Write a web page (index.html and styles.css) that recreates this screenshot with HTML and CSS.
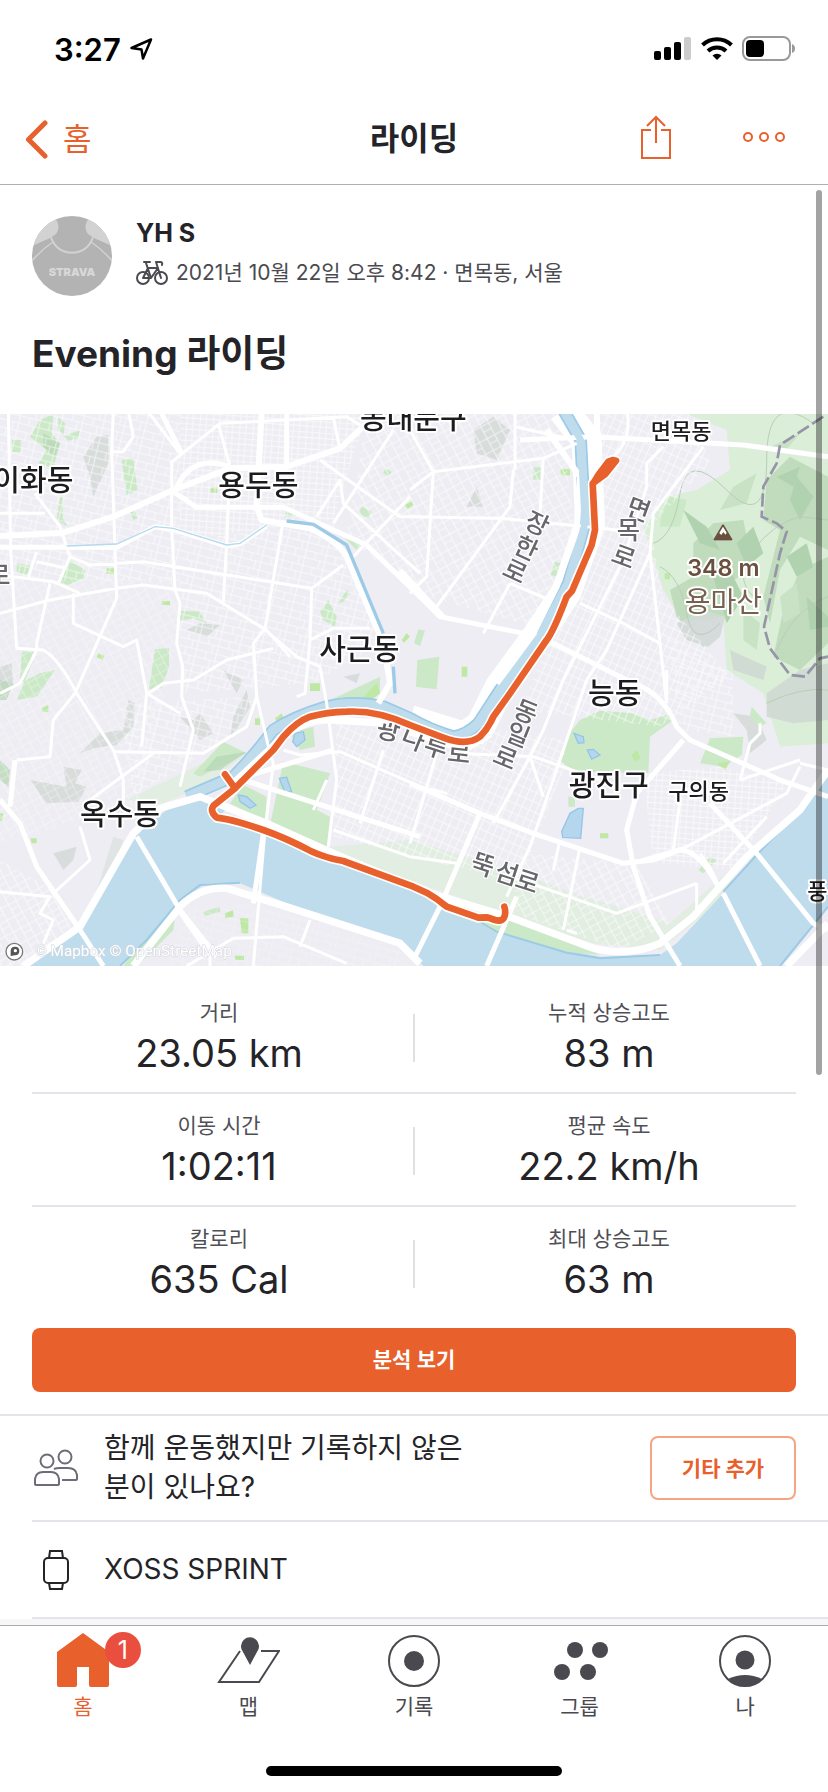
FILE: index.html
```
<!DOCTYPE html>
<html lang="ko">
<head>
<meta charset="utf-8">
<meta name="viewport" content="width=device-width, initial-scale=1">
<title>라이딩</title>
<link rel="stylesheet" href="styles.css">
</head>
<body>
<div class="app">
  <div class="status">
    <div class="status-left">
      <span>3:27</span>
      <svg width="24" height="24" viewBox="0 0 24 24" fill="none" stroke="#000" stroke-width="2.500" stroke-linejoin="round"><path d="M22 2.500 L2.500 11 L12.500 12.500 L14 21.500 Z"/></svg>
    </div>
    <div class="status-right">
      <svg width="38" height="26" viewBox="0 0 38 26"><rect x="0" y="15" width="7" height="9" rx="2"/><rect x="10" y="11" width="7" height="13" rx="2"/><rect x="20" y="6" width="7" height="18" rx="2"/><rect x="30" y="1" width="7" height="23" rx="2" fill="#ccc"/></svg>
      <svg width="32" height="26" viewBox="0 0 32 26" fill="none" stroke="#000" stroke-width="4"><path d="M1.500 9 A21 21 0 0 1 30.500 9"/><path d="M7 15 A13 13 0 0 1 25 15"/><path d="M16 24 L11.500 19.500 A6.500 6.500 0 0 1 20.500 19.500 Z" fill="#000" stroke="none"/></svg>
      <svg width="54" height="26" viewBox="0 0 54 26"><rect x="1" y="1" width="47" height="23" rx="7" fill="none" stroke="#999" stroke-width="2"/><rect x="4" y="4" width="18" height="17" rx="4"/><path d="M50 8 Q53 9 53 12.500 Q53 16 50 17 Z" fill="#999"/></svg>
    </div>
  </div>

  <header class="nav">
    <a class="back" href="#home">
      <svg width="24" height="40" viewBox="0 0 24 40" fill="none" stroke="#e8602c" stroke-width="5" stroke-linecap="round" stroke-linejoin="round"><path d="M21 4 L4.500 20.500 L21 37"/></svg>
      <span>홈</span>
    </a>
    <h1 class="nav-title">라이딩</h1>
    <div class="nav-actions">
      <button class="icon-btn" type="button" aria-label="공유">
        <svg width="32" height="44" viewBox="0 0 32 44" fill="none" stroke="#e8602c" stroke-width="2"><path d="M11 15 H2 V43 H30 V15 H21 M16 28 V2 M7 11 L16 2 L25 11"/></svg>
      </button>
      <button class="icon-btn" type="button" aria-label="더 보기">
        <svg width="44" height="12" viewBox="0 0 44 12" fill="none" stroke="#e8602c" stroke-width="2"><circle cx="6" cy="6" r="4"/><circle cx="22" cy="6" r="4"/><circle cx="38" cy="6" r="4"/></svg>
      </button>
    </div>
  </header>

  <main class="content">
    <div class="scrollbar"></div>
    <section class="athlete">
      <svg class="avatar" viewBox="0 0 80 80">
        <defs><clipPath id="av"><circle cx="40" cy="40" r="40"/></clipPath></defs>
        <g clip-path="url(#av)">
          <rect width="80" height="80" fill="#b3b3b3"/>
          <path d="M0 0 H22 C27 7 28 13 24 18 L18 22 L0 30 Z M80 0 H58 C53 7 52 13 56 18 L62 22 L80 30 Z" fill="#d2d2d2"/>
          <path d="M19 21 C25 42 55 42 61 21" fill="none" stroke="#d2d2d2" stroke-width="2"/>
          <path d="M21 26 Q9 34 0 45 M59 26 Q71 34 80 45" fill="none" stroke="#d2d2d2" stroke-width="1.500"/>
        </g>
        <text x="40" y="60" text-anchor="middle" class="avatar-text">STRAVA</text>
      </svg>
      <div class="athlete-info">
        <strong class="name">YH S</strong>
        <div class="meta">
          <svg width="32" height="26" viewBox="0 0 32 26" fill="none" stroke="#4a4a50" stroke-width="2" stroke-linejoin="round" stroke-linecap="round"><circle cx="7" cy="18" r="6"/><circle cx="25" cy="18" r="6"/><path d="M7 18 L12 8 H22 L15 18 H7 M15 18 L10 3 M8 2 H14 M25 18 L20 2 H24 Q27 2 26 5"/></svg>
          <span>2021년 10월 22일 오후 8:42 · 면목동, 서울</span>
        </div>
      </div>
    </section>
    <h2 class="title">Evening 라이딩</h2>

    <svg class="map" viewBox="0 12 2484 1656" role="img" aria-label="라이딩 경로 지도">
      <defs>
        <pattern id="s1" width="62" height="46" patternUnits="userSpaceOnUse" patternTransform="rotate(14)"><path d="M0 2 H62 M2 0 V46 M32 0 V24 M0 24 H62 M48 24 V46" /></pattern>
        <pattern id="s2" width="44" height="56" patternUnits="userSpaceOnUse" patternTransform="rotate(24)"><path d="M0 2 H44 M2 0 V56 M22 0 V56 M0 30 H44"/></pattern>
        <pattern id="s3" width="52" height="40" patternUnits="userSpaceOnUse" patternTransform="rotate(-28)"><path d="M0 2 H52 M2 0 V40 M0 20 H30 M28 0 V40"/></pattern>
        <pattern id="s4" width="40" height="34" patternUnits="userSpaceOnUse" patternTransform="rotate(4)"><path d="M0 2 H40 M2 0 V34 M20 0 V34 M0 18 H40"/></pattern>
      </defs>
      <rect y="12" width="2484" height="1656" fill="#eeedf3"/>

      <g class="hill">
        <path d="M250 140 L290 80 L325 75 L325 160 L280 260 L270 200 Z M560 660 L600 640 L660 645 L620 680 Z M670 780 L730 810 L710 850 Z M1420 60 L1480 20 L1530 60 L1490 150 L1430 130 Z M1430 230 L1450 290 L1400 290 Z M90 1110 L200 1130 L190 1070 L245 1080 L225 1120 L260 1130 L235 1175 L140 1180 Z M240 1030 L300 970 L370 960 L385 870 L405 880 L400 950 L350 1005 L280 1015 Z M540 920 L580 930 L600 910 L640 970 L600 990 Z M160 1330 L230 1310 L220 1350 L190 1380 Z M700 920 L740 840 L750 890 L690 990 Z M0 770 L35 760 L40 830 L0 860 Z M2200 910 L2270 920 L2300 990 L2250 1030 L2240 960 Z M2190 690 L2330 680 L2310 720 L2220 720 Z M1030 800 L1080 790 L1070 820 Z"/>
        <path d="M270 1510 L340 1280 L370 1290 L300 1480 Z" opacity=".6"/>
      </g>
      <g class="park-soft">
        <path d="M2060 12 H2484 V1000 L2340 1010 L2290 850 L2180 780 L2170 620 L2050 640 L1990 540 L1930 350 L2000 260 L2090 240 L2190 180 L2180 60 Z"/>
        <path d="M380 1170 L650 1040 L740 1030 L640 1110 L470 1190 Z M990 1310 L1230 1290 L1560 1390 L1720 1450 L2010 1540 L2200 1370 L2240 1350 L2130 1500 L1980 1620 L1780 1600 L1540 1520 L1000 1330 Z" opacity=".7"/>
      </g>
      <g class="park">
        <path d="M120 30 L160 12 L155 70 L180 100 L160 175 L115 160 L140 120 L90 80 Z M175 20 L195 40 L190 80 L240 60 L235 85 L205 92 L175 60 Z M36 90 H62 V126 H36 Z M365 150 L400 145 L412 240 L380 255 Z M180 260 H188 V325 L205 352 L170 330 Z M205 450 L255 480 L250 505 L205 525 L172 515 Z M50 460 L92 468 L85 495 L50 488 Z M390 305 L405 302 L412 325 L400 330 Z M540 602 L600 605 L620 640 L580 625 L540 632 Z M960 605 L985 570 L1010 620 L1005 650 L970 630 Z M1015 580 L1040 540 L1052 550 L1030 575 Z M465 718 L507 714 V770 L485 835 L447 838 Z M65 725 H110 L80 800 L50 870 L110 860 L165 780 L120 790 L60 820 Z M1035 385 L1080 400 L1070 420 Z M860 296 L910 318 L855 322 Z M1085 290 L1115 305 L1105 325 L1075 310 Z M1155 175 L1175 185 L1168 200 L1150 190 Z"/>
        <path d="M980 875 L1140 800 L1140 850 L1100 880 Z M1252 750 L1318 740 L1310 838 L1248 830 Z M1600 172 H1622 V210 H1600 Z M1665 455 L1685 460 L1670 500 L1652 495 Z M1255 658 L1275 662 L1260 708 L1242 700 Z"/>
        <path d="M850 1055 L990 1090 L950 1200 L990 1220 L980 1315 L810 1245 Z M730 1125 L800 1160 L795 1235 L690 1180 Z M580 1090 L670 995 L740 1030 L600 1100 Z M870 970 L940 950 L945 1010 L900 1020 Z"/>
        <path d="M1740 930 L1800 902 L1900 910 L1950 930 L2015 910 L2020 930 L1950 980 L1945 1090 L1730 1085 L1680 1055 L1700 980 Z M2100 1060 L2130 985 L2230 980 L2225 1035 L2170 1070 Z M2255 890 L2300 940 L2275 950 L2250 915 Z M1985 300 L2010 260 L2060 270 L2040 350 L1980 350 Z M1705 1160 H1725 V1190 H1705 Z M2095 1380 L2130 1340 L2150 1350 L2110 1390 Z"/>
        <path d="M370 1668 L440 1570 L530 1480 L520 1560 L440 1640 L410 1668 Z M610 1505 L660 1490 V1505 L615 1518 Z"/>
      </g>
      <g class="park-bright">
        <path d="M632 232 H652 V248 H632 Z M320 475 H342 V491 H320 Z M485 573 H510 V585 H485 Z M295 730 L314 738 L308 750 L290 742 Z M930 820 H960 V843 H930 Z M1212 285 L1235 272 L1240 285 L1222 297 Z M1682 178 H1710 V196 H1682 Z M1385 770 H1402 V800 H1385 Z M1994 490 H2010 V508 H1994 Z M1205 690 L1220 670 L1230 680 L1212 698 Z M720 1525 H745 V1570 H725 Z M675 1510 L700 1500 V1520 L675 1525 Z M705 1637 H732 V1650 H705 Z M1800 1270 H1825 V1285 H1800 Z M1895 1035 L1910 1020 L1922 1045 L1905 1055 Z M125 895 L145 885 V905 H127 Z M765 925 H780 V945 H765 Z M825 925 L845 910 L850 922 L830 935 Z M0 1210 H10 L6 1232 H0 Z M92 1285 H110 V1300 H95 Z M2150 1060 L2190 1055 L2175 1080 Z M1090 860 L1130 820 L1140 850 L1110 872 Z"/>
      </g>
      <g class="ridge">
        <path d="M2300 210 L2370 140 L2484 200 V420 L2400 380 L2340 480 L2310 640 L2290 560 L2340 360 L2290 330 Z M2080 400 L2140 340 L2230 330 L2260 480 L2180 520 L2170 640 L2110 710 L2030 620 L2010 540 L2080 500 Z M2400 480 L2484 440 V700 L2400 780 L2320 740 L2350 600 Z M650 1040 L740 1025 L660 1080 L610 1085 Z M130 70 L180 100 L165 140 L130 110 Z M0 1050 L30 1080 L25 1130 L0 1110 Z M0 810 L40 820 L20 870 H0 Z"/>
        <path d="M2300 850 L2400 780 L2484 760 V930 L2380 940 L2300 920 Z" fill="#cdd6d2"/>
        <path d="M2030 640 L2110 600 L2175 620 L2160 680 L2125 710 L2060 690 Z M2190 720 L2300 770 L2290 810 L2200 780 Z" fill="#cdd6d2"/>
        <path d="M2050 300 L2120 350 L2160 420 L2100 400 Z M2140 500 L2190 480 L2230 560 L2180 640 Z M2390 200 L2440 260 L2400 330 L2370 270 Z M2420 560 L2484 620 V650 L2430 660 Z M2330 200 L2400 170 L2380 230 Z M2210 400 L2260 350 L2290 430 L2240 470 Z M2360 440 L2420 400 L2440 470 L2390 500 Z" fill="#a3c9a2"/>
        <path d="M2340 560 L2390 520 L2400 610 L2350 640 Z M2230 600 L2280 640 L2270 720 L2230 690 Z M2200 230 L2270 190 L2240 280 L2160 300 Z M2310 110 L2400 70 L2350 130 Z" fill="#c4dfc1"/>
      </g>
      <g class="contour">
        <path d="M1960 400 Q2020 380 2040 250 T2180 240 T2300 150 T2440 40 M1980 470 Q2040 500 2060 610 T2160 640 M2260 560 Q2200 500 2260 420 T2400 320 L2484 330 M2330 720 Q2380 600 2484 560 M2300 880 Q2400 830 2484 840"/>
      </g>

      <g class="streets">
        <rect y="12" width="540" height="500" fill="url(#s1)"/>
        <path d="M540 12 H1100 L1000 330 L540 390 Z" fill="url(#s4)"/>
        <path d="M0 512 L540 500 L530 700 L420 1180 L0 1300 Z" fill="url(#s3)" opacity=".6"/>
        <path d="M540 390 L1000 340 L1080 500 L1140 700 L940 820 L540 850 Z" fill="url(#s1)"/>
        <path d="M1100 12 H1680 L1730 400 L1600 650 L1250 550 L1040 380 Z" fill="url(#s3)"/>
        <path d="M1800 12 H2080 L2130 160 L1950 350 L1990 560 L2190 800 L1980 950 L1560 900 L1780 350 Z" fill="url(#s2)"/>
        <path d="M1010 940 L1380 1010 L1500 960 L1700 990 L1690 1080 L1560 1420 L1000 1280 Z" fill="url(#s2)"/>
        <path d="M1560 1330 L1910 1360 L2010 1540 L1860 1620 L1540 1510 Z" fill="url(#s3)"/>
        <path d="M1930 1090 L2160 1070 L2360 1120 L2200 1380 L1960 1360 Z" fill="url(#s4)"/>
        <path d="M0 1350 L160 1440 L230 1550 L80 1668 H0 Z" fill="url(#s3)"/>
        <path d="M360 880 L760 860 L700 980 L400 1160 Z M2000 680 L2200 790 L2200 980 L2040 960 Z" fill="url(#s1)"/>
        <path d="M560 1500 L760 1480 L1200 1620 V1668 H500 Z" fill="url(#s1)" opacity=".4"/>
      </g>

      <path class="water" d="M90 1668 L240 1550 L400 1280 L500 1200 L600 1160 L680 1195 L650 1230 L790 1265 L960 1345 L1260 1445 L1430 1535 L1500 1570 L1650 1610 L1800 1640 L1980 1635 L2030 1600 L2170 1450 L2260 1340 L2400 1200 L2484 1100 V1490 L2440 1545 L2340 1668 H1270 L1210 1605 L860 1480 L720 1420 L620 1420 L540 1470 L440 1590 L360 1668 Z"/>
      <path class="park-shape" d="M1410 1520 L1540 1530 L1690 1590 L1800 1635 L1700 1625 L1480 1565 Z"/>
      <path class="shore" d="M360 1668 L440 1590 L540 1470 L600 1425 L720 1418 M1430 1530 L1490 1565 L1700 1628 L1800 1645 L1980 1635 M2340 1668 L2440 1545 L2484 1490 M2170 1445 L2270 1335 L2400 1200"/>
      <path class="casing" d="M1688 0 L1760 90 L1770 340 L1700 545 L1610 680 L1500 830 L1440 950 L1390 980 L1230 930"/>
      <path class="river-edge" d="M1690 0 L1742 90 L1755 340 L1705 520 L1625 670 L1500 840 L1435 940 Q1400 975 1360 980 Q1290 960 1230 925 L1150 890 Q1060 870 980 890 Q880 920 820 960 Q760 1040 700 1100 L560 1160"/>
      <path class="river" d="M1690 0 L1742 90 L1755 340 L1705 520 L1625 670 L1500 840 L1435 940 Q1400 975 1360 980 Q1290 960 1230 925 L1150 890 Q1060 870 980 890 Q880 920 820 960 Q760 1040 700 1100 L560 1160"/>
      <g class="pond"><path d="M885 970 L910 965 L915 990 L890 1010 L878 995 Z M838 1105 L860 1102 L875 1145 L855 1148 Z M715 1155 L740 1160 L768 1185 L750 1195 L720 1175 Z M1722 970 L1750 980 L1752 998 L1735 1000 Z M1762 1020 L1780 1018 L1800 1035 L1775 1047 Z M1735 1195 H1750 L1742 1285 L1688 1282 L1685 1265 L1710 1210 Z"/></g>

      <g class="road minor">
        <path d="M25 0 L32 420 L50 715 L130 720 Q180 750 230 850 L340 1020 L370 1110 V1180 M0 310 H135 M105 250 L180 350 L210 440 L175 520 M210 440 L270 465 L430 455 L680 495 L935 535 L1030 465 M340 0 L335 125 L350 565 L225 850 L160 930 L150 1040 L50 1050 M340 125 L370 125 L400 80 L385 0 M110 425 L85 500 M110 455 L200 475 M0 495 L160 515 L240 550 M0 610 L150 570 L350 535 L430 525 L620 550 L790 655 L890 740 L960 770 L980 880 L1010 1110 L985 1310 M150 520 L110 700 V720 L60 820 L0 850 M220 550 V640 L370 710 L410 690 L440 850 L425 1010 M440 0 L540 130 M515 160 L515 355 L525 540 L540 580 L530 700 L548 770 L545 860 L580 960 L540 1130 M655 40 L690 170 L680 400 L670 575 M850 330 L795 655 L870 740 M795 655 L760 700 L770 860 L810 1030 L820 1060 L795 1260 L760 1668 M445 850 L490 820 L580 810 L680 750 L820 715 M440 850 L540 910 M510 160 L660 40 L1040 20 L1080 45 M1000 20 L1020 120 M950 320 L1020 210 L1030 280 L1260 490 M960 150 L1200 320 L1260 320 M1180 60 L1000 340 M1060 440 L1230 260 M935 535 L930 690 L915 850 L890 860 M930 690 L1000 655 L1110 655"/>
        <path d="M1230 60 L1300 185 L1280 500 L1230 550 M1230 240 L1300 185 L1630 145 L1730 100 M1545 0 V180 M1230 320 L1500 325 L1760 350 L1900 365 M1630 140 L1620 310 M1540 180 L1530 290 L1310 590 M1530 520 L1450 670 M1530 520 L1650 570 M1545 50 L1700 85 M1880 0 Q1900 90 1830 150 M1990 110 L1940 160 V230 L1870 450 L1690 810 L1630 960 L1590 1040 L1480 1240 M2110 110 L1960 310 L1950 430 L1980 700 L2000 880 M1950 430 L1820 720 L1760 810 L1680 1050 L1590 1310 L1520 1460 M1740 580 L1870 640 L1980 700 M1370 1030 L1600 1040 L1730 1085 L1800 1110 M1590 1040 L1630 1160 M1310 1030 L1230 1300 M1680 1290 L1660 1380 M1740 1310 L1690 1560 M2040 1170 L2020 1320 M1730 1570 L1700 1560"/>
        <path d="M340 1025 L610 1030 L740 950 L770 860 M460 1030 L270 1170 M240 1250 L270 1350 L160 1450 M0 1445 L150 1460 L120 1510 L160 1530 L130 1600 M540 1510 L630 1640 V1668 M560 1668 L700 1585 L850 1580 L1040 1660 M930 1530 L900 1610 M980 1110 L940 1200 M1150 1020 L1080 1240 M1000 1260 L1230 1340 L1370 1360 M850 1020 L900 1035 L1020 1025 L1260 1130 L1340 1150 M1500 1390 L1620 1430 L1850 1510 L2090 1420 M2090 1420 V1510 M1890 1360 L2060 1310 L2360 1150 L2400 1070 M2100 1330 Q2140 1380 2155 1430 M2130 1180 L2270 1330 M2170 1360 L2300 1220 M2220 1110 L2400 1050 M2220 1110 L2250 1000 L2280 970 V940 M2400 1060 L2484 1080 M2000 880 L2000 780"/>
      </g>
      <g class="road mid">
        <path d="M0 412 H350 L465 350 L520 358 L680 408 L720 402 L800 348 M520 245 L590 292 H850 L1100 405 L1260 560 L1320 620 L1620 680 L1900 820 Q1990 850 2030 950 L2070 990 L2340 1110 L2484 1160 M690 170 Q580 130 530 230 M860 0 V170 M480 0 L545 130 M1560 90 L1780 80 L2230 105 L2484 140 M1200 480 L1330 620"/>
        <path d="M1000 1020 L720 1105 M730 1110 L1260 1280 M1230 1120 L1440 1210 L1600 1270 L1870 1360 L1960 1350 L2040 1320 Q2100 1320 2160 1440 M1440 1210 L1320 1490 L1240 1650 M2050 990 L1910 1150 L1880 1260 L1900 1370 L1950 1520 L2040 1668 M2130 1180 L2270 1330 L2440 1540 L2484 1560 M2170 1450 L2280 1668 M1550 1460 L1460 1668 M410 1280 L540 1500 L650 1640 M790 1270 L760 1480"/>
        <path d="M0 1170 L60 1240 L110 1370 L240 1560 L310 1668 M45 1050 L30 1190"/>
      </g>
      <g class="road major">
        <path d="M0 378 L190 368 L340 320 L520 240 L690 175 L860 170 L1020 115 L1100 40 M785 0 L770 290 L785 330 L930 355 Q1010 390 1040 440 L1150 700 L1170 820 L1135 880 M1790 0 L1800 330 L1740 530 L1640 700 L1500 900 L1440 1000 M1640 60 L1740 200 L1730 360 L1670 530 L1590 690 L1490 820" stroke-width="18"/>
        <path d="M70 1668 L240 1550 L400 1270 L480 1195 L600 1160 L800 1240 L1000 1330 L1260 1440 L1540 1525 L1740 1600 Q1860 1650 1980 1600 L2080 1520 L2240 1340 L2400 1200 L2484 1080 M400 1668 L540 1490 Q600 1430 680 1435 L860 1490 L1200 1600 L1260 1660 M700 1120 L850 980 Q920 925 1000 930 L1160 940 M2360 1668 L2484 1540"/>
      </g>
      <path class="river inner" d="M1690 0 L1742 90 L1755 340 L1705 520 L1625 670 L1500 840"/>
      <path class="stream" d="M200 408 L350 402 L465 350 L520 355 L680 405 L720 400 L800 345"/>
      <path class="stream wide" d="M860 333 L940 343 L1040 405 L1150 670 M1180 770 L1185 850"/>
      <path class="boundary" d="M2470 20 L2340 105 L2330 160 L2290 230 L2285 320 L2330 340 L2360 365 L2340 430 L2292 650 L2310 715 L2370 795 L2415 800 L2460 745 L2484 740"/>

      <g class="label big">
        <text x="-20" y="244">이화동</text><text x="655" y="258">용두동</text>
        <text x="1080" y="56">동대문구</text><text x="958" y="750">사근동</text>
        <text x="240" y="1246">옥수동</text><text x="1764" y="882">능동</text><text x="1706" y="1158">광진구</text>
      </g>
      <g class="label small"><text x="1952" y="86">면목동</text><text x="2005" y="1168">구의동</text><text x="2422" y="1466">풍</text></g>
      <g class="label street">
        <text x="-38" y="522">로</text>
        <g text-anchor="middle">
          <text transform="translate(1600 366) rotate(25)">장</text><text transform="translate(1568 439) rotate(25)">한</text><text transform="translate(1534 508) rotate(25)">로</text>
          <text transform="translate(1906 324) rotate(20)">면</text><text transform="translate(1885 388)">목</text><text transform="translate(1862 466) rotate(20)">로</text>
          <text transform="translate(1568 930) rotate(22)">동</text><text transform="translate(1544 1000) rotate(22)">일</text><text transform="translate(1506 1068) rotate(22)">로</text>
          <text transform="translate(1160 987) rotate(12)">광</text><text transform="translate(1230 1012) rotate(22)">나</text><text transform="translate(1300 1037) rotate(18)">루</text><text transform="translate(1374 1057) rotate(6)">로</text>
          <text transform="translate(1440 1390) rotate(18)">뚝</text><text transform="translate(1512 1416) rotate(18)">섬</text><text transform="translate(1574 1440) rotate(18)">로</text>
        </g>
      </g>
      <g class="label peak" text-anchor="middle">
        <text x="2170" y="498" class="height">348 m</text><text x="2170" y="606">용마산</text>
      </g>
      <path d="M2139 392 L2169 340 L2199 392 Z" fill="#fff"/>
      <path d="M2143 389 L2169 345 L2195 389 Z" fill="#fff" stroke="#694f3e" stroke-width="5" stroke-linejoin="round"/>
      <path d="M2143 389 L2157 368 L2164 375 L2170 366 L2176 374 L2182 367 L2195 389 Z" fill="#694f3e"/>

      <g class="route-case"><path id="route" d="M1513 1490 Q1519 1510 1512 1523 Q1505 1536 1485 1530 L1462 1522 L1435 1523 L1340 1490 Q1310 1465 1280 1448 L1240 1430 L1030 1353 Q980 1345 930 1322 Q860 1285 790 1260 Q700 1228 650 1223 Q625 1200 645 1183 L705 1135 L820 1020 L850 980 Q890 935 930 920 Q980 907 1040 905 Q1130 900 1230 945 L1330 983 Q1400 1010 1440 980 Q1465 955 1480 920 L1530 850 L1640 690 Q1660 665 1700 560 L1716 543 L1775 405 L1785 360 L1778 220 L1815 193 L1848 152 L1838 150 L1825 155 L1795 195 L1780 220 M705 1135 L675 1093"/></g>
      <use href="#route" class="route"/>

      <g class="credit"><circle cx="43" cy="1625" r="25" fill="#fff" stroke="#777" stroke-width="4"/><path d="M32 1638 V1622 A13 13 0 1 1 45 1636 Z" fill="#555"/><circle cx="46" cy="1622" r="5" fill="#fff"/><text x="104" y="1639">© Mapbox © OpenStreetMap</text></g>
    </svg>

    <dl class="stats">
      <div class="stat-row">
        <div class="stat"><dt>거리</dt><dd>23.05 km</dd></div>
        <div class="stat"><dt>누적 상승고도</dt><dd>83 m</dd></div>
      </div>
      <div class="stat-row">
        <div class="stat"><dt>이동 시간</dt><dd>1:02:11</dd></div>
        <div class="stat"><dt>평균 속도</dt><dd>22.2 km/h</dd></div>
      </div>
      <div class="stat-row">
        <div class="stat"><dt>칼로리</dt><dd>635 Cal</dd></div>
        <div class="stat"><dt>최대 상승고도</dt><dd>63 m</dd></div>
      </div>
    </dl>

    <div class="cta"><button class="primary" type="button">분석 보기</button></div>

    <section class="row row-friends">
      <svg class="row-icon" width="48" height="40" viewBox="0 0 48 40" fill="none" stroke="#6d6d78" stroke-width="2"><circle cx="15" cy="13" r="6.500"/><circle cx="33" cy="9" r="6.500"/><path d="M3 36 V31 Q4 24 11 24 H19 Q26 24 27 31 V36 Q27 37 25 37 H5 Q3 37 3 36 Z M22 21 Q24 20 28 20 H36 Q44 20 45 27 V31 Q45 32 43 32 H30"/></svg>
      <p>함께 운동했지만 기록하지 않은 분이 있나요?</p>
      <button class="outline" type="button">기타 추가</button>
    </section>
    <section class="row row-device">
      <svg class="row-icon" width="48" height="42" viewBox="0 0 48 42" fill="none" stroke="#242428" stroke-width="2"><rect x="12" y="9" width="24" height="25" rx="4"/><path d="M17 9 L18 2 H30 L31 9 M17 34 L18 40 H30 L31 34"/></svg>
      <p>XOSS SPRINT</p>
    </section>
  </main>

  <nav class="tabs">
    <a class="tab active" href="#home">
      <span class="tab-icon"><svg width="56" height="56" viewBox="0 0 56 56"><path d="M28 1 L54 20 V53 Q54 55 52 55 H36 Q34 55 34 53 V35 H22 V53 Q22 55 20 55 H4 Q2 55 2 53 V20 Z" fill="#e8602c"/></svg><span class="badge">1</span></span>
      <span>홈</span>
    </a>
    <a class="tab" href="#map">
      <span class="tab-icon"><svg width="64" height="56" viewBox="0 0 64 56"><path d="M24 19 L3 50 H43 L63 19 H45" fill="none" stroke="#4a494f" stroke-width="2"/><path d="M34 33 L27 20 A9 9 0 1 1 41 20 Z" fill="#4a494f"/></svg></span>
      <span>맵</span>
    </a>
    <a class="tab" href="#record">
      <span class="tab-icon"><svg width="56" height="56" viewBox="0 0 56 56"><circle cx="28" cy="29" r="25" fill="none" stroke="#4a494f" stroke-width="2"/><circle cx="28" cy="29" r="10" fill="#4a494f"/></svg></span>
      <span>기록</span>
    </a>
    <a class="tab" href="#groups">
      <span class="tab-icon"><svg width="56" height="56" viewBox="0 0 56 56" fill="#4a494f"><circle cx="23" cy="18" r="8"/><circle cx="48" cy="18" r="8"/><circle cx="10" cy="40" r="8"/><circle cx="36" cy="40" r="8"/></svg></span>
      <span>그룹</span>
    </a>
    <a class="tab" href="#me">
      <span class="tab-icon"><svg width="56" height="56" viewBox="0 0 56 56"><circle cx="28" cy="29" r="25" fill="none" stroke="#4a494f" stroke-width="2"/><circle cx="28" cy="28" r="9.500" fill="#4a494f"/><path d="M11 47 Q28 39 45 47 Q38 54 28 54 Q18 54 11 47 Z" fill="#4a494f"/></svg></span>
      <span>나</span>
    </a>
  </nav>
  <div class="home-indicator"></div>
</div>
</body>
</html>
```
FILE: styles.css
```
* { box-sizing: border-box; }
body {
  margin: 0;
  background: #fff;
  color: #242428;
  font-family: Inter, "Noto Sans CJK KR", sans-serif;
}
h1, h2, p, dl, dd { margin: 0; }
button { font-family: inherit; cursor: pointer; }
a { text-decoration: none; color: inherit; }
svg { display: block; flex: none; }

.app { display: flex; flex-direction: column; min-height: 100vh; }

.status {
  display: flex;
  justify-content: space-between;
  align-items: center;
  height: 84px;
  padding: 14px 32px 0 54px;
  color: #000;
  font-size: 31px;
  font-weight: 600;
}
.status-left { display: flex; align-items: center; gap: 8px; }
.status-right { display: flex; align-items: center; gap: 9px; }

.nav {
  display: grid;
  grid-template-columns: 1fr auto 1fr;
  align-items: center;
  height: 101px;
  padding: 10px 24px 0;
  border-bottom: 1px solid #b0b0b0;
}
.back {
  display: flex;
  align-items: center;
  gap: 15px;
  color: #e8602c;
  font-size: 31px;
  line-height: 40px;
}
.nav-title { font-size: 32px; line-height: 40px; font-weight: 700; }
.nav-actions {
  display: flex;
  justify-content: flex-end;
  align-items: center;
  gap: 70px;
  padding: 0 18px 4px 0;
}
.icon-btn { padding: 0; border: 0; background: none; }

.content { position: relative; flex: 1; padding-top: 31px; }
.scrollbar {
  position: absolute;
  top: 5px;
  right: 6px;
  width: 6px;
  height: 885px;
  border-radius: 3px;
  background: rgba(0, 0, 0, 0.36);
}

.athlete { display: flex; gap: 24px; padding: 0 32px; }
.avatar { width: 80px; height: 80px; }
.avatar-text { font-size: 11px; font-weight: 900; fill: #d8d8d8; }
.athlete-info { display: flex; flex-direction: column; }
.name { font-size: 25px; line-height: 34px; font-weight: 700; }
.meta {
  display: flex;
  align-items: center;
  gap: 8px;
  margin-top: 8px;
  color: #4a4a50;
  font-size: 21px;
  line-height: 30px;
}
.title { padding: 29px 32px 31px; font-size: 37px; line-height: 58px; font-weight: 700; }

.map { width: 100%; height: auto; }
.hill { fill: #d8dddc; }
.park-soft { fill: #dbeed8; }
.park, .park-shape { fill: #cbe9c7; }
.park-bright { fill: #bee8a4; }
.ridge { fill: #b7d6b5; opacity: 0.75; }
.contour { fill: none; stroke: #b9cdb7; stroke-width: 3; }
.streets { opacity: 0.65; }
pattern path { fill: none; stroke: #fff; stroke-width: 3; }
.water { fill: #bfdced; }
.shore { fill: none; stroke: #9dcae6; stroke-width: 6; }
.casing { fill: none; stroke: #fff; stroke-width: 90; }
.river, .river-edge { fill: none; stroke: #9dcae6; stroke-width: 38; stroke-linejoin: round; }
.river { stroke: #bfdced; stroke-width: 28; }
.river.inner { stroke-width: 20; }
.pond { fill: #b4d7ee; stroke: #95c5e8; stroke-width: 4; }
.road { fill: none; stroke: #fff; stroke-linejoin: round; }
.minor { stroke-width: 9; }
.mid { stroke-width: 15; }
.major { stroke-width: 22; }
.stream { fill: none; stroke: #b5d9ed; stroke-width: 4; }
.stream.wide { stroke: #9dcae6; stroke-width: 10; }
.boundary { fill: none; stroke: #9694a8; stroke-width: 8; stroke-dasharray: 40 12; }
.label {
  paint-order: stroke;
  stroke: #fff;
  stroke-width: 12px;
  stroke-linejoin: round;
  fill: #1c1c1e;
  font-family: "Noto Sans CJK KR", sans-serif;
}
.big { font-size: 87px; font-weight: 500; }
.small { font-size: 66px; font-weight: 500; }
.street { font-size: 76px; font-weight: 500; fill: #66666b; stroke-width: 8px; }
.peak { font-size: 84px; fill: #77604f; }
.peak .height { font-family: Inter, sans-serif; font-size: 70px; font-weight: 600; fill: #694f3e; }
.route, .route-case { fill: none; stroke: #e8602c; stroke-width: 20; stroke-linecap: round; stroke-linejoin: round; }
.route-case { stroke: #fff; stroke-width: 30; }
.credit { font-family: Roboto, sans-serif; font-size: 46px; }
.credit text { fill: #fff; stroke: #d3d5dc; stroke-width: 3px; paint-order: stroke; }

.stats { padding: 15px 32px 0; }
.stat-row { display: grid; grid-template-columns: 1fr 1fr; height: 113px; border-bottom: 2px solid #e4e4ea; }
.stat-row:last-child { border-bottom: 0; }
.stat { position: relative; padding-top: 17px; text-align: center; padding-right: 8px; }
.stat + .stat { padding-left: 8px; padding-right: 0; }
.stat + .stat::before {
  content: "";
  position: absolute;
  left: -1px;
  top: 33px;
  width: 2px;
  height: 48px;
  background: #e0e0e5;
}
.stat dt { color: #4f4f56; font-size: 21px; line-height: 30px; }
.stat dd { font-size: 38px; line-height: 51px; }

.cta { padding: 8px 32px 22px; }
.primary {
  display: block;
  width: 100%;
  height: 64px;
  padding: 0 0 4px;
  border: 0;
  border-radius: 8px;
  background: #e8602c;
  color: #fff;
  font-size: 21px;
  font-weight: 600;
}
.row { display: flex; align-items: center; gap: 24px; padding-right: 32px; font-size: 28px; line-height: 39px; }
.row p { flex: 1; }
.row-friends { height: 106px; padding-left: 32px; border-top: 2px solid #e4e4ea; }
.row-friends p { padding-right: 152px; word-break: keep-all; }
.row-device { height: 99px; margin-left: 32px; border-top: 2px solid #e4e4ea; border-bottom: 2px solid #e4e4ea; }
.outline {
  width: 146px;
  height: 64px;
  padding: 0 0 2px;
  border: 2px solid #f3a67f;
  border-radius: 8px;
  background: #fff;
  color: #e8602c;
  font-size: 21px;
  font-weight: 700;
}

.tabs {
  display: grid;
  grid-template-columns: repeat(5, 1fr);
  height: 141px;
  padding-top: 6px;
  border-top: 1px solid #aaa;
  box-shadow: 0 -6px 0 #f7f7f7;
  background: #fff;
  color: #4a494f;
  font-size: 21px;
  line-height: 30px;
}
.tab { display: flex; flex-direction: column; align-items: center; gap: 4px; }
.tab.active { color: #e8602c; }
.tab-icon { position: relative; }
.badge {
  position: absolute;
  top: 0;
  left: 50px;
  width: 36px;
  height: 36px;
  border-radius: 50%;
  background: #ea4e3e;
  color: #fff;
  font-size: 25px;
  line-height: 36px;
  text-align: center;
}
.home-indicator { width: 296px; height: 10px; margin: 0 auto 16px; border-radius: 5px; background: #000; }
```
